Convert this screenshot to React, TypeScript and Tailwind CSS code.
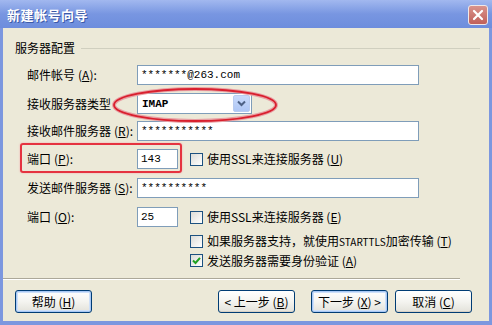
import React from 'react';

const font = { fontFamily: '"Noto Sans CJK SC", "Liberation Sans", sans-serif' };
const mono = { fontFamily: '"Liberation Mono", monospace' };

const Label: React.FC<{ text: string; k: string }> = ({ text, k }) => (
  <div className="w-[110px] text-[12px] leading-[14px] text-black whitespace-nowrap">
    {text}
    <span className="ml-[3px]">(</span>
    <u>{k}</u>
    <span>):</span>
  </div>
);

const TextBox: React.FC<{ value: string; w: string }> = ({ value, w }) => (
  <div className={`${w} h-[20px] bg-white border border-[#7F9DB9] flex items-center pl-[3px] text-[11px] leading-[14px] text-black`} style={mono}>
    {value}
  </div>
);

const Check: React.FC<{ checked?: boolean }> = ({ checked }) => (
  <div className="w-[13px] h-[13px] border border-[#1C5180] bg-gradient-to-br from-[#DCDCD7] to-white flex items-center justify-center shrink-0">
    {checked && (
      <svg width="9" height="9" viewBox="0 0 9 9">
        <path d="M1 4.5 L3.5 7 L8 1.8" fill="none" stroke="#21A121" strokeWidth="2" />
      </svg>
    )}
  </div>
);

const CheckRow: React.FC<{ children: React.ReactNode; checked?: boolean }> = ({ children, checked }) => (
  <div className="flex items-center gap-[4px] text-[12px] leading-[14px] text-black whitespace-nowrap">
    <Check checked={checked} />
    <span>{children}</span>
  </div>
);

const Btn: React.FC<{ children: React.ReactNode; focus?: boolean }> = ({ children, focus }) => (
  <button
    className={`w-[77px] h-[23px] rounded-[3px] border border-[#003C74] bg-gradient-to-b from-white via-[#F4F4F0] to-[#E3E2DA] text-[12px] leading-[14px] text-black flex items-center justify-center ${
      focus ? 'shadow-[inset_0_0_0_1px_#A8C8F5,inset_0_0_0_2px_#CEE0F9]' : 'shadow-[inset_0_-1px_0_#D6D0C5]'
    }`}
  >
    {children}
  </button>
);

export default function App() {
  return (
    <div className="w-[492px] h-[325px] flex flex-col bg-[#7C97DF] overflow-hidden relative leading-[14px]" style={font}>
      {/* title bar */}
      <div className="h-[28px] shrink-0 flex items-center justify-between pl-[7px] pr-[4px] pt-[2px] bg-gradient-to-b from-[#A2B8EF] via-[#7896E1] to-[#6D8DDD]">
        <span className="text-white text-[13px] font-bold tracking-[0.5px] [text-shadow:1px_1px_0_#3B5AA8]">新建帐号向导</span>
        <div className="w-[20px] h-[20px] rounded-[3px] border border-[#F0E8E8] bg-gradient-to-b from-[#D9938C] to-[#C0605A] flex items-center justify-center">
          <svg width="12" height="12" viewBox="0 0 12 12">
            <path d="M2 2 L10 10 M10 2 L2 10" stroke="white" strokeWidth="2.2" strokeLinecap="round" />
          </svg>
        </div>
      </div>

      {/* body */}
      <div className="h-[293px] shrink-0 mx-[3px] bg-[#ECE9D8] flex flex-col pt-[12px]">
        <div className="h-[16px] flex items-center pl-[12px] pr-[9px] gap-[6px]">
          <span className="text-[12px] text-black">服务器配置</span>
          <div className="flex-1 h-[1px] bg-[#D0CFBF]" />
        </div>

        <div className="flex flex-col pl-[24px] mt-[9px]">
          <div className="h-[20px] flex items-center">
            <Label text="邮件帐号" k="A" />
            <TextBox value="*******@263.com" w="w-[282px]" />
          </div>

          <div className="h-[21px] flex items-center mt-[8px]">
            <div className="w-[110px] text-[12px]">接收服务器类型</div>
            <div className="w-[115px] h-[21px] bg-white border border-[#7F9DB9] flex items-center">
              <span className="flex-1 pl-[4px] text-[11px] font-bold text-black" style={mono}>IMAP</span>
              <div className="w-[17px] h-[17px] mr-[1px] rounded-[2px] bg-gradient-to-b from-[#C9DAFB] to-[#AFC7F5] border border-[#B9CCF0] flex items-center justify-center">
                <svg width="9" height="7" viewBox="0 0 9 7">
                  <path d="M1 1.5 L4.5 5 L8 1.5" fill="none" stroke="#4D6185" strokeWidth="2" />
                </svg>
              </div>
            </div>
          </div>

          <div className="h-[20px] flex items-center mt-[7px]">
            <Label text="接收邮件服务器" k="R" />
            <TextBox value="***********" w="w-[282px]" />
          </div>

          <div className="h-[20px] flex items-center mt-[8px]">
            <Label text="端口" k="P" />
            <TextBox value="143" w="w-[41px]" />
            <div className="ml-[12px]">
              <CheckRow>使用SSL来连接服务器 (<u>U</u>)</CheckRow>
            </div>
          </div>

          <div className="h-[20px] flex items-center mt-[9px]">
            <Label text="发送邮件服务器" k="S" />
            <TextBox value="**********" w="w-[282px]" />
          </div>

          <div className="h-[20px] flex items-center mt-[9px]">
            <Label text="端口" k="O" />
            <TextBox value="25" w="w-[41px]" />
            <div className="ml-[12px]">
              <CheckRow>使用SSL来连接服务器 (<u>E</u>)</CheckRow>
            </div>
          </div>

          <div className="flex flex-col pl-[163px] mt-[5px]">
            <div className="h-[19px] flex items-center">
              <CheckRow>
                如果服务器支持，就使用<span className="text-[10px]">STARTTLS</span>加密传输 (<u>T</u>)
              </CheckRow>
            </div>
            <div className="h-[19px] flex items-center">
              <CheckRow checked>发送服务器需要身份验证 (<u>A</u>)</CheckRow>
            </div>
          </div>
        </div>

        <div className="mt-[8px] mr-[29px] h-[2px] border-t border-[#ACA899] border-b border-b-white" />

        <div className="flex items-center mt-[10px] pl-[12px] pr-[17px]">
          <Btn focus>帮助 (<u>H</u>)</Btn>
          <div className="flex-1" />
          <Btn>&lt; 上一步 (<u>B</u>)</Btn>
          <div className="w-[16px]" />
          <Btn focus>下一步 (<u>X</u>) &gt;</Btn>
          <div className="w-[7px]" />
          <Btn>取消 (<u>C</u>)</Btn>
        </div>
      </div>

      {/* red annotations */}
      <svg className="absolute left-0 top-0 pointer-events-none" width="492" height="325">
        <ellipse cx="195" cy="105" rx="81" ry="16" fill="none" stroke="#E8A0A4" strokeWidth="4" />
        <ellipse cx="195" cy="105" rx="81" ry="16" fill="none" stroke="#D9202E" strokeWidth="1.8" />
      </svg>
      <div className="absolute left-[20px] top-[143px] w-[162px] h-[30px] rounded-[3px] border-2 border-[#E53340] shadow-[0_0_2px_#F2A0A6] pointer-events-none" />
    </div>
  );
}
